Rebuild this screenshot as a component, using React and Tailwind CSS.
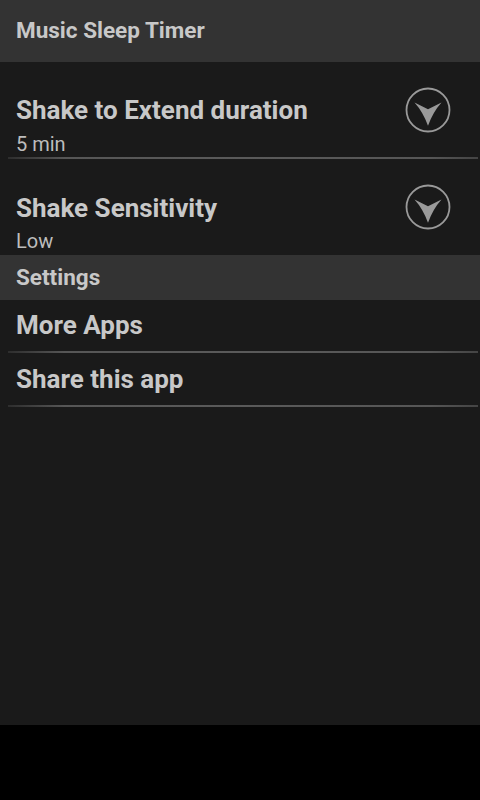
import React from "react";

function ArrowIcon() {
  return (
    <svg width="48" height="48" viewBox="0 0 48 48">
      <circle cx="24" cy="24" r="21.5" fill="none" stroke="#9a9a9a" strokeWidth="1.8" />
      <path d="M10.5 16.5 L24 23.2 L37.5 16.5 Q29 26 24 39.7 Q19 26 10.5 16.5 Z" fill="#9a9a9a" />
    </svg>
  );
}

function Divider() {
  return <div className="h-[2px] ml-2 mr-[2px] bg-[linear-gradient(to_right,#2e2e2e,#565656_12%,#5a5a5a_50%,#565656_90%,#444444)]" />;
}

export default function App() {
  const font = { fontFamily: "Roboto, 'Noto Sans', sans-serif" };
  return (
    <div className="w-[480px] h-[800px] bg-black flex flex-col text-[#c8c8c8]" style={font}>
      <div className="h-[62px] bg-[#333333] flex items-center px-4 text-[22.5px] font-bold">
        Music Sleep Timer
      </div>
      <div className="h-[663px] bg-[#1a1a1a] flex flex-col">
        <div className="h-[95px] flex">
          <div className="flex-1 pl-4 pt-[33px] flex flex-col">
            <div className="text-[26px] leading-[30px] font-bold">Shake to Extend duration</div>
            <div className="text-[20px] leading-[24px] mt-[7px] text-[#bdbdbd]">5 min</div>
          </div>
          <div className="mr-[28px] self-center"><ArrowIcon /></div>
        </div>
        <Divider />
        <div className="h-[96px] flex">
          <div className="flex-1 pl-4 pt-[34px] flex flex-col">
            <div className="text-[26px] leading-[30px] font-bold">Shake Sensitivity</div>
            <div className="text-[20px] leading-[24px] mt-[6px] text-[#bdbdbd]">Low</div>
          </div>
          <div className="mr-[28px] self-center"><ArrowIcon /></div>
        </div>
        <div className="h-[45px] bg-[#333333] flex items-center px-4 text-[22.5px] font-bold">
          Settings
        </div>
        <div className="h-[51px] flex items-center px-4 text-[26px] font-bold">More Apps</div>
        <Divider />
        <div className="h-[52px] flex items-center px-4 text-[26px] font-bold">Share this app</div>
        <Divider />
      </div>
    </div>
  );
}
